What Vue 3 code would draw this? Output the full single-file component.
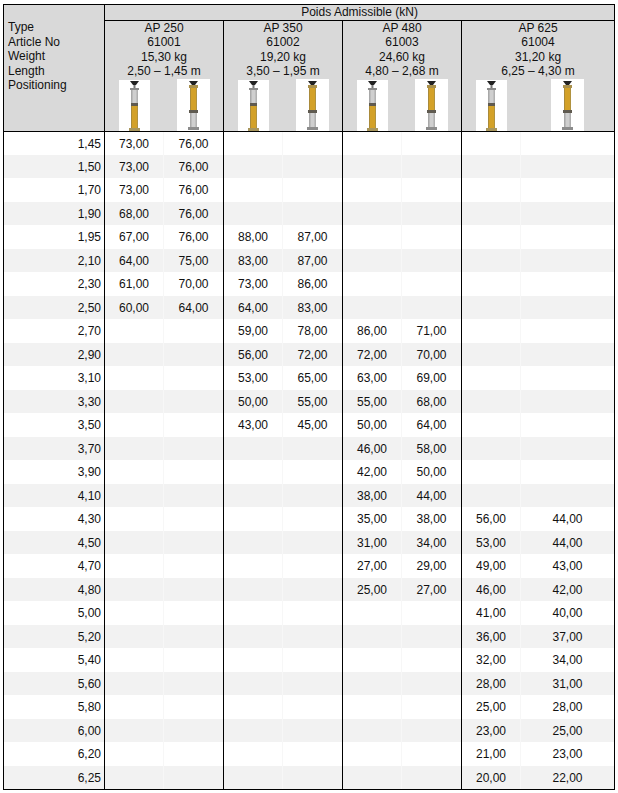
<script setup>
const products = [
  { type: 'AP 250', no: '61001', weight: '15,30 kg', length: '2,50 – 1,45 m' },
  { type: 'AP 350', no: '61002', weight: '19,20 kg', length: '3,50 – 1,95 m' },
  { type: 'AP 480', no: '61003', weight: '24,60 kg', length: '4,80 – 2,68 m' },
  { type: 'AP 625', no: '61004', weight: '31,20 kg', length: '6,25 – 4,30 m' },
]
const labels = ['Type', 'Article No', 'Weight', 'Length', 'Positioning']
const colWidths = [59, 60, 59, 60, 59, 60, 59, 94]
const raw = [
  ['1,45', '73,00', '76,00'],
  ['1,50', '73,00', '76,00'],
  ['1,70', '73,00', '76,00'],
  ['1,90', '68,00', '76,00'],
  ['1,95', '67,00', '76,00', '88,00', '87,00'],
  ['2,10', '64,00', '75,00', '83,00', '87,00'],
  ['2,30', '61,00', '70,00', '73,00', '86,00'],
  ['2,50', '60,00', '64,00', '64,00', '83,00'],
  ['2,70', '', '', '59,00', '78,00', '86,00', '71,00'],
  ['2,90', '', '', '56,00', '72,00', '72,00', '70,00'],
  ['3,10', '', '', '53,00', '65,00', '63,00', '69,00'],
  ['3,30', '', '', '50,00', '55,00', '55,00', '68,00'],
  ['3,50', '', '', '43,00', '45,00', '50,00', '64,00'],
  ['3,70', '', '', '', '', '46,00', '58,00'],
  ['3,90', '', '', '', '', '42,00', '50,00'],
  ['4,10', '', '', '', '', '38,00', '44,00'],
  ['4,30', '', '', '', '', '35,00', '38,00', '56,00', '44,00'],
  ['4,50', '', '', '', '', '31,00', '34,00', '53,00', '44,00'],
  ['4,70', '', '', '', '', '27,00', '29,00', '49,00', '43,00'],
  ['4,80', '', '', '', '', '25,00', '27,00', '46,00', '42,00'],
  ['5,00', '', '', '', '', '', '', '41,00', '40,00'],
  ['5,20', '', '', '', '', '', '', '36,00', '37,00'],
  ['5,40', '', '', '', '', '', '', '32,00', '34,00'],
  ['5,60', '', '', '', '', '', '', '28,00', '31,00'],
  ['5,80', '', '', '', '', '', '', '25,00', '28,00'],
  ['6,00', '', '', '', '', '', '', '23,00', '25,00'],
  ['6,20', '', '', '', '', '', '', '21,00', '23,00'],
  ['6,25', '', '', '', '', '', '', '20,00', '22,00'],
]
const rows = raw.map((r) => {
  const values = r.slice(1)
  while (values.length < 8) values.push('')
  return { height: r[0], values }
})
</script>

<template>
  <div class="page">
    <table class="load-table">
      <colgroup>
        <col class="label-col" />
        <col v-for="(w, i) in colWidths" :key="i" :style="{ width: w + 'px' }" />
      </colgroup>
      <thead>
        <tr>
          <th class="labels" rowspan="2">
            <div v-for="l in labels" :key="l">{{ l }}</div>
          </th>
          <th class="title" colspan="8">Poids Admissible (kN)</th>
        </tr>
        <tr>
          <th v-for="p in products" :key="p.no" class="product" colspan="2">
            <div>{{ p.type }}</div>
            <div>{{ p.no }}</div>
            <div>{{ p.weight }}</div>
            <div>{{ p.length }}</div>
            <div class="pics">
              <span class="pic pic-a">
                <svg viewBox="0 0 31 51" width="31" height="51">
                  <path d="M11 1h9l-3 4h-3z" fill="#222" />
                  <rect x="14.5" y="5" width="2" height="3" fill="#777" />
                  <rect x="11" y="8" width="9" height="2" fill="#8a8a8a" />
                  <rect x="12" y="10" width="7" height="13" fill="#cfcfcf" />
                  <rect x="12" y="10" width="1.5" height="13" fill="#a8a8a8" />
                  <rect x="17.5" y="10" width="1.5" height="13" fill="#b0b0b0" />
                  <rect x="12" y="23" width="7" height="3" fill="#5f5a50" />
                  <rect x="12" y="26" width="7" height="22" fill="#d3a128" />
                  <rect x="12" y="26" width="1" height="22" fill="#a98a3a" />
                  <rect x="18" y="26" width="1" height="22" fill="#b0923f" />
                  <rect x="10" y="48" width="11" height="3" fill="#a8965c" />
                </svg>
              </span>
              <span class="pic pic-b">
                <svg viewBox="0 0 33 52" width="33" height="52">
                  <path d="M12 2h9l-3 4h-3z" fill="#222" />
                  <rect x="12" y="6" width="9" height="3" fill="#a88f4c" />
                  <rect x="13" y="9" width="7" height="22" fill="#d3a128" />
                  <rect x="13" y="9" width="1" height="22" fill="#a98a3a" />
                  <rect x="19" y="9" width="1" height="22" fill="#b0923f" />
                  <rect x="12" y="31" width="9" height="3" fill="#5f5a50" />
                  <rect x="13" y="34" width="7" height="14" fill="#cfcfcf" />
                  <rect x="13" y="34" width="1.5" height="14" fill="#a8a8a8" />
                  <rect x="18.5" y="34" width="1.5" height="14" fill="#b0b0b0" />
                  <rect x="11" y="48" width="11" height="3" fill="#8c8c8c" />
                </svg>
              </span>
            </div>
          </th>
        </tr>
      </thead>
      <tbody>
        <tr v-for="(r, i) in rows" :key="r.height" :class="{ alt: i % 2 === 1 }">
          <td class="h">{{ r.height }}</td>
          <td
            v-for="(v, j) in r.values"
            :key="j"
            class="v"
            :class="j % 2 === 0 ? 'first' : 'second'"
          >{{ v }}</td>
        </tr>
      </tbody>
    </table>
  </div>
</template>

<style>
html, body { margin: 0; background: #fff; }
</style>

<style scoped>
.page {
  padding: 4px 3px 3px 3px;
}
.load-table {
  width: 611px;
  table-layout: fixed;
  border-collapse: collapse;
  font: 12px/14.6px "Liberation Sans", Arial, sans-serif;
  color: #111;
}
.label-col { width: 101px; }
th {
  background: #d9d9d9;
  font-weight: 400;
  padding: 0;
  border: 1px solid #000;
}
.labels {
  text-align: left;
  vertical-align: top;
  padding: 15px 0 0 4px;
}
.title {
  height: 14px;
  text-align: center;
}
.product {
  text-align: center;
  vertical-align: top;
}
.pics {
  display: flex;
  height: 52px;
}
.pic {
  flex: 0 0 59px;
  display: flex;
  justify-content: center;
}
.product:last-child .pic-b { flex: 1 1 auto; }
.pic svg { background: #fff; display: block; }
.pic-a svg { margin-top: 1px; }
td {
  height: 23.5px;
  padding: 1px 0 0;
  box-sizing: border-box;
}
.alt td { background: #f2f2f2; }
.h {
  text-align: right;
  padding-right: 3px;
  border-left: 1px solid #000;
  border-right: 1px solid #000;
}
.v { text-align: center; }
.first { border-right: 1px solid #f7f7f7; }
.second { border-right: 1px solid #000; }
tbody tr:last-child td { border-bottom: 1px solid #000; }
</style>
